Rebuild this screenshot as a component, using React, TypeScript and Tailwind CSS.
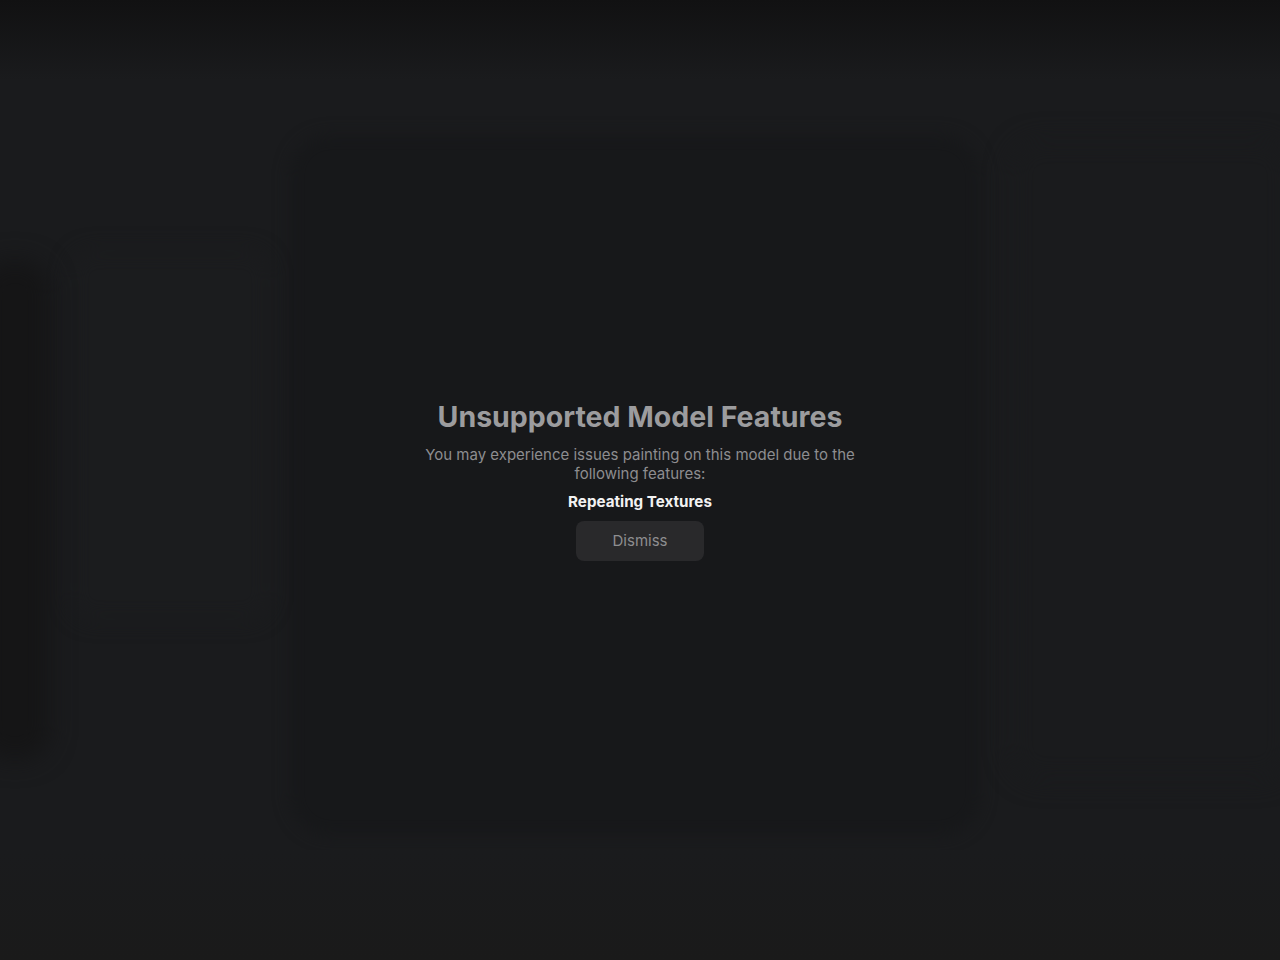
import React from "react";

export default function App() {
  return (
    <div
      className="relative w-[1280px] h-[960px] overflow-hidden bg-[#1a1b1d]"
      style={{ fontFamily: "Inter, 'Noto Sans', sans-serif" }}
    >
      {/* blurred backdrop */}
      <div className="absolute inset-0 pointer-events-none">
        <div className="absolute left-0 top-0 w-full h-[80px] bg-gradient-to-b from-[#111112] to-[#1a1b1d]" />
        <div className="absolute left-[290px] top-[135px] w-[690px] h-[700px] rounded-[40px] bg-[#17181a] blur-[8px]" />
        <div className="absolute left-[70px] top-[250px] w-[200px] h-[370px] rounded-[24px] bg-[#1b1c1e] blur-[10px]" />
        <div className="absolute left-[-20px] top-[260px] w-[70px] h-[500px] rounded-[30px] bg-[#151516] blur-[12px]" />
        <div className="absolute left-[1010px] top-[140px] w-[280px] h-[640px] rounded-[30px] bg-[#1a1b1d] blur-[12px]" />
        <div className="absolute left-0 top-[850px] w-full h-[110px] bg-gradient-to-b from-[#1a1b1d] to-[#1a1a1a]" />
      </div>

      {/* dialog content */}
      <div className="relative flex flex-col items-center pt-[399px]">
        <h1 className="text-[28.5px] leading-[36px] font-bold text-[#9c9c9e]">
          Unsupported Model Features
        </h1>
        <p className="mt-[10px] w-[440px] text-center text-[15px] leading-[19px] text-[#8d8d90]">
          You may experience issues painting on this model due to the following features:
        </p>
        <p className="mt-[9px] text-[15.2px] leading-[20px] font-bold text-[#f2f2f2]">
          Repeating Textures
        </p>
        <button className="mt-[9px] w-[128px] h-[40px] rounded-[8px] bg-[#29292b] text-[15px] text-[#8e8e90]">
          Dismiss
        </button>
      </div>
    </div>
  );
}
